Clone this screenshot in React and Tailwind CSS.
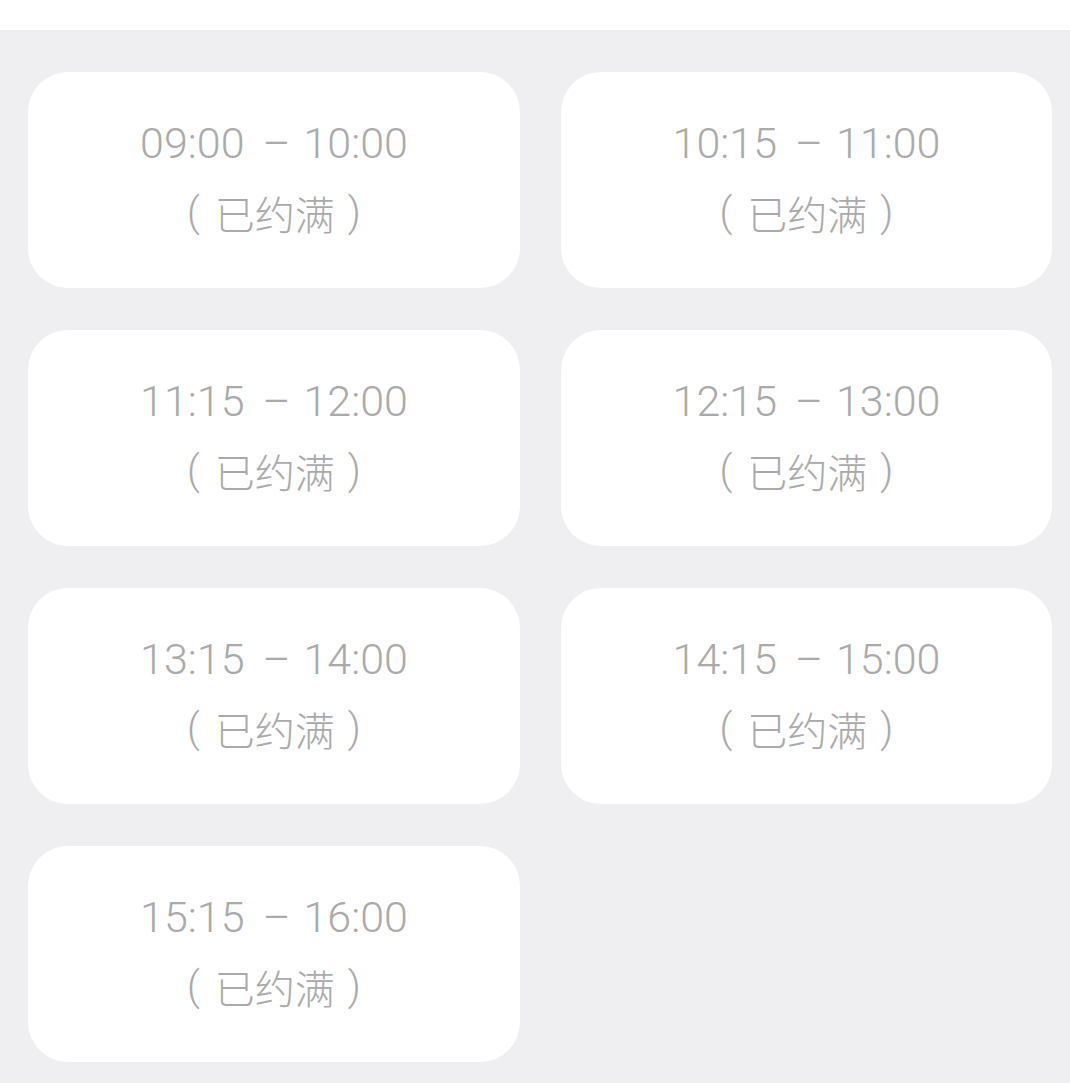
import React from 'react';

const slots = [
  ['09:00', '10:00'],
  ['10:15', '11:00'],
  ['11:15', '12:00'],
  ['12:15', '13:00'],
  ['13:15', '14:00'],
  ['14:15', '15:00'],
  ['15:15', '16:00'],
];

const roboto = { fontFamily: 'Roboto, "Noto Sans CJK SC", sans-serif' };

const SlotCard = ({ start, end }) => (
  <div className="h-[216px] bg-white rounded-[40px] flex flex-col items-center justify-center gap-[20px] pb-[4px] text-[#aaaaaa]">
    <div className="text-[43px] leading-[50px] font-light flex items-center" style={roboto}>
      <span>{start}</span>
      <span className="ml-[18px] mr-[13px]">–</span>
      <span>{end}</span>
    </div>
    <div className="text-[40px] leading-[50px] font-light flex items-center">
      <span style={roboto}>(</span>
      <span className="ml-[15px] mr-[13px]">已约满</span>
      <span style={roboto}>)</span>
    </div>
  </div>
);

const App = () => {
  return (
    <div
      className="w-[1070px] h-[1083px] bg-white overflow-hidden"
      style={{ fontFamily: '"Noto Sans CJK SC", "Noto Sans", sans-serif' }}
    >
      <div className="h-[30px] bg-white" />
      <div className="h-[1053px] bg-[#efeff1] pt-[42px] pl-[28px]">
        <div className="grid grid-cols-[492px_491px] gap-x-[41px] gap-y-[42px]">
          {slots.map(([s, e]) => (
            <SlotCard key={s} start={s} end={e} />
          ))}
        </div>
      </div>
    </div>
  );
};

export default App;
